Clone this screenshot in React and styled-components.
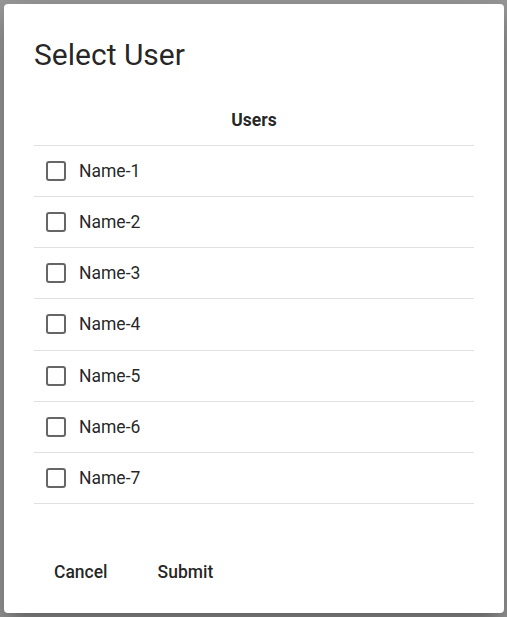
import React, { useState } from "react";
import styled, { createGlobalStyle } from "styled-components";

const GlobalStyle = createGlobalStyle`
  html, body {
    margin: 0;
    padding: 0;
    background: #9a9a9a;
    font-family: Roboto, "Liberation Sans", sans-serif;
  }
`;

const Backdrop = styled.div`
  width: 507px;
  height: 617px;
  padding: 4px 3px 4px 4px;
  box-sizing: border-box;
`;

const Dialog = styled.div`
  width: 500px;
  height: 609px;
  background: #fff;
  border-radius: 4px;
  box-shadow: 0 11px 15px -7px rgba(0, 0, 0, 0.2),
    0 24px 38px 3px rgba(0, 0, 0, 0.14), 0 9px 46px 8px rgba(0, 0, 0, 0.12);
  box-sizing: border-box;
  padding: 33px 30px 0;
  display: flex;
  flex-direction: column;
  color: rgba(0, 0, 0, 0.87);
`;

const Title = styled.h2`
  margin: 0;
  font-size: 30px;
  line-height: 36px;
  font-weight: 400;
`;

const Table = styled.div`
  margin-top: 22px;
  display: flex;
  flex-direction: column;
`;

const HeadRow = styled.div`
  height: 50px;
  border-bottom: 1px solid #e0e0e0;
  display: flex;
  align-items: center;
  justify-content: center;
  font-size: 17.5px;
  font-weight: 700;
`;

const Row = styled.label`
  height: 50.15px;
  border-bottom: 1px solid #e0e0e0;
  display: flex;
  align-items: center;
  gap: 13px;
  padding-left: 12px;
  font-size: 17.5px;
  cursor: pointer;
`;

const Box = styled.span`
  width: 20px;
  height: 20px;
  box-sizing: border-box;
  border: 2px solid ${(p) => (p.$checked ? "#1976d2" : "#666")};
  background: ${(p) => (p.$checked ? "#1976d2" : "transparent")};
  border-radius: 3px;
  display: flex;
  align-items: center;
  justify-content: center;
`;

const Actions = styled.div`
  margin-top: 48px;
  margin-left: 10px;
  display: flex;
  gap: 30px;
`;

const Button = styled.button`
  border: none;
  background: none;
  padding: 8px 10px;
  font-family: Roboto, "Liberation Sans", sans-serif;
  font-size: 17.5px;
  line-height: 24px;
  font-weight: 500;
  color: rgba(0, 0, 0, 0.87);
  border-radius: 4px;
  cursor: pointer;
`;

const users = [1, 2, 3, 4, 5, 6, 7].map((n) => `Name-${n}`);

export default function App() {
  const [checked, setChecked] = useState({});

  const toggle = (name) =>
    setChecked((prev) => ({ ...prev, [name]: !prev[name] }));

  return (
    <>
      <GlobalStyle />
      <Backdrop>
        <Dialog>
          <Title>Select User</Title>
          <Table>
            <HeadRow>Users</HeadRow>
            {users.map((name) => (
              <Row key={name} onClick={() => toggle(name)}>
                <Box $checked={checked[name]}>
                  {checked[name] && (
                    <svg width="14" height="14" viewBox="0 0 24 24">
                      <path
                        d="M4 12l5 5L20 6"
                        fill="none"
                        stroke="#fff"
                        strokeWidth="3"
                      />
                    </svg>
                  )}
                </Box>
                {name}
              </Row>
            ))}
          </Table>
          <Actions>
            <Button>Cancel</Button>
            <Button>Submit</Button>
          </Actions>
        </Dialog>
      </Backdrop>
    </>
  );
}
